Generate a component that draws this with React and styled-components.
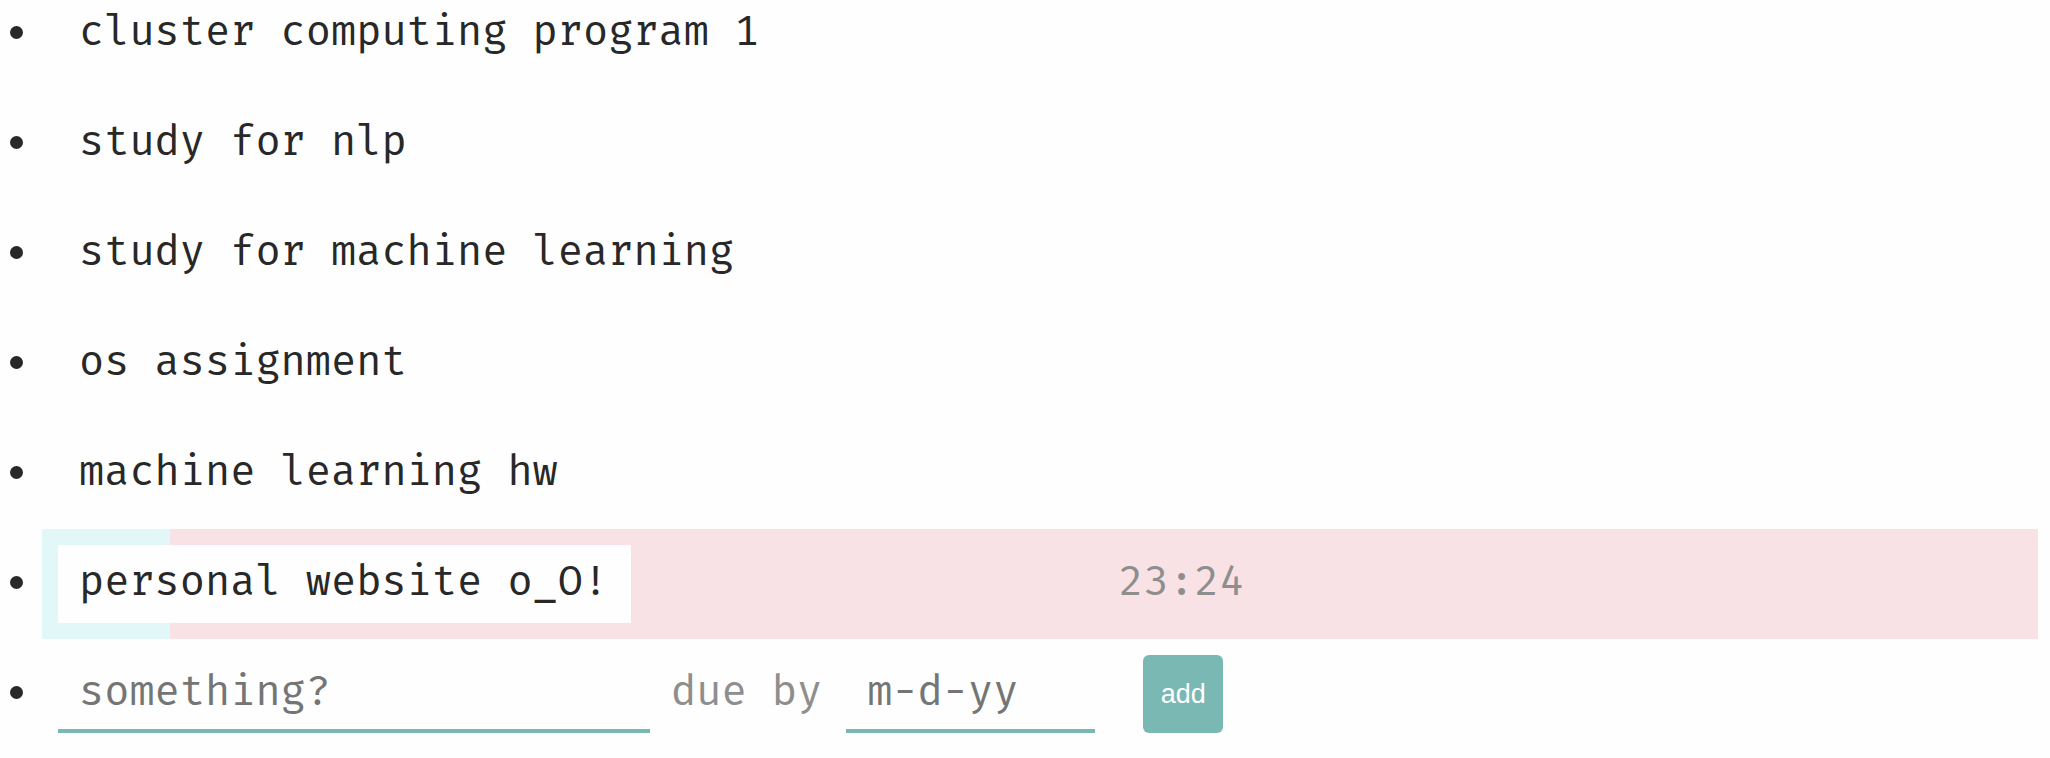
import React, { useState } from "react";
import styled, { createGlobalStyle } from "styled-components";

const GlobalStyle = createGlobalStyle`
  *, *::before { box-sizing: border-box; }
  body {
    margin: 0;
    background: #fefefe;
    color: #282828;
    font-family: "Fira Mono", "Fira Code", "Liberation Mono", monospace;
    font-size: 42px;
    line-height: 48px;
  }
`;

const List = styled.ul`
  list-style: none;
  margin: -21px 0 0;
  padding: 0 12px 0 10px;
`;

const Item = styled.li`
  display: flex;
  align-items: center;
  gap: 19px;

  &::before {
    content: "";
    flex: none;
    width: 13px;
    height: 13px;
    margin-bottom: 4px;
    border-radius: 50%;
    background: #282828;
  }
`;

const Task = styled.div`
  flex: 1;
  min-width: 0;
  display: grid;
  grid-template-columns: 54% 1fr;
  align-items: center;
  padding: 16px;
  background: ${({ $progress }) =>
    $progress
      ? `linear-gradient(to right, #e2f7f7 ${$progress}%, #f9e2e5 ${$progress}%)`
      : "none"};
`;

const Name = styled.span`
  justify-self: start;
  padding: 12px 23px 18px 21px;
  background: #fefefe;
`;

const Time = styled.time`
  padding: 12px 0 18px;
  color: #8e8e8e;
`;

const Form = styled.form`
  flex: 1;
  min-width: 0;
  display: flex;
  align-items: center;
  padding: 16px;
`;

const Field = styled.input`
  width: ${({ $width }) => $width}px;
  min-width: 0;
  height: 78px;
  padding: 0 21px 2px;
  border: 0;
  border-bottom: 4px solid #7ab8b3;
  border-radius: 0;
  outline: none;
  background: transparent;
  color: inherit;
  font: inherit;

  &::placeholder {
    color: #757575;
    opacity: 1;
  }
`;

const DueLabel = styled.label`
  padding: 12px 24px 18px 21px;
  color: #8e8e8e;
  white-space: nowrap;
`;

const AddButton = styled.button`
  flex: none;
  width: 80px;
  height: 78px;
  margin-left: 48px;
  padding: 0;
  border: 0;
  border-radius: 6px;
  background: #7ab8b3;
  color: #fff;
  font: 27px "Liberation Sans", Arial, sans-serif;
  cursor: pointer;
`;

const initialTasks = [
  { name: "cluster computing program 1" },
  { name: "study for nlp" },
  { name: "study for machine learning" },
  { name: "os assignment" },
  { name: "machine learning hw" },
  { name: "personal website o_O!", progress: 6.4, time: "23:24" },
];

export default function App() {
  const [tasks, setTasks] = useState(initialTasks);
  const [name, setName] = useState("");
  const [due, setDue] = useState("");

  const addTask = (event) => {
    event.preventDefault();
    if (!name.trim()) return;
    setTasks([...tasks, { name, due }]);
    setName("");
    setDue("");
  };

  return (
    <>
      <GlobalStyle />
      <List>
        {tasks.map((task, index) => (
          <Item key={index}>
            <Task $progress={task.progress}>
              <Name>{task.name}</Name>
              {task.time && <Time>{task.time}</Time>}
            </Task>
          </Item>
        ))}
        <Item>
          <Form onSubmit={addTask}>
            <Field
              $width={592}
              aria-label="task"
              placeholder="something?"
              value={name}
              onChange={(event) => setName(event.target.value)}
            />
            <DueLabel htmlFor="due">due by</DueLabel>
            <Field
              $width={249}
              id="due"
              placeholder="m-d-yy"
              value={due}
              onChange={(event) => setDue(event.target.value)}
            />
            <AddButton type="submit">add</AddButton>
          </Form>
        </Item>
      </List>
    </>
  );
}
